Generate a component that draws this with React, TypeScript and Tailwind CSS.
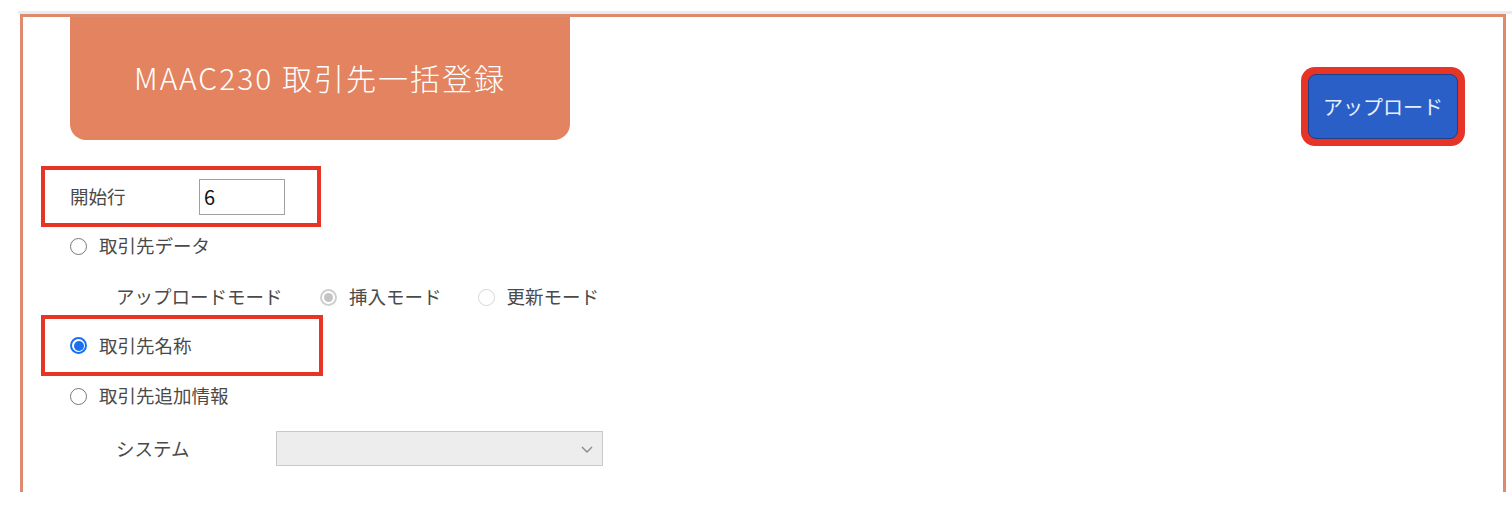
import { ReactNode } from "react";

const JP = { fontFamily: '"Noto Sans CJK JP", "Noto Sans", sans-serif' };

function Radio({ checked = false, disabled = false }: { checked?: boolean; disabled?: boolean }) {
  if (checked && disabled) {
    return (
      <span className="flex h-[17px] w-[17px] items-center justify-center rounded-full border-2 border-[#cfcfcf] bg-white">
        <span className="h-[9px] w-[9px] rounded-full bg-[#c4c4c4]" />
      </span>
    );
  }
  if (checked) {
    return (
      <span className="flex h-[17px] w-[17px] items-center justify-center rounded-full border-2 border-[#1a6ff0] bg-white">
        <span className="h-[10px] w-[10px] rounded-full bg-[#1a6ff0]" />
      </span>
    );
  }
  return (
    <span
      className={
        disabled
          ? "h-[17px] w-[17px] rounded-full border-[1.5px] border-[#d6d6d6] bg-white"
          : "h-[17px] w-[17px] rounded-full border-[1.5px] border-[#777] bg-white"
      }
    />
  );
}

function Option({ checked, disabled, children }: { checked?: boolean; disabled?: boolean; children: ReactNode }) {
  return (
    <label className="flex items-center gap-[12px]">
      <Radio checked={checked} disabled={disabled} />
      <span>{children}</span>
    </label>
  );
}

export default function App() {
  return (
    <div className="h-[518px] w-full bg-white pt-[11px] text-[18.5px] text-[#4a4a4a]" style={JP}>
      <div className="ml-[18px] h-[3px] bg-[#e8ebf2]" />
      <div className="ml-[20px] h-[478px] w-[1486px] border-x-[3px] border-t-[3px] border-[#dd8a6d]">
        <div className="flex items-start justify-between">
          <div className="ml-[47px] flex h-[123px] w-[500px] items-center justify-center rounded-b-[16px] bg-[#e3835f] pb-[2px] text-[30px] font-light tracking-[2px] text-white">
            MAAC230 取引先一括登録
          </div>
          <div className="mr-[38px] mt-[50px] rounded-[14px] bg-[#e63427] p-[7px]">
            <button className="flex h-[65px] w-[150px] items-center justify-center rounded-[8px] border border-[#1d3f8c] bg-[#2a5fc7] text-[20px] text-[#e6f0ff]">
              アップロード
            </button>
          </div>
        </div>

        <div className="ml-[18px] mt-[20px] flex flex-col">
          <div className="flex h-[61px] w-[280px] items-center border-4 border-[#e63427] pl-[25px]">
            <span className="w-[129px]">開始行</span>
            <input
              readOnly
              value="6"
              className="h-[36px] w-[86px] border border-[#a0a0a0] px-[4px] text-[20px] text-[#111] outline-none"
            />
          </div>

          <div className="flex h-[38px] items-center pl-[29px]">
            <Option>取引先データ</Option>
          </div>

          <div className="mt-[14px] flex h-[36px] items-center pl-[75px]">
            <span className="w-[204px]">アップロードモード</span>
            <div className="flex items-center gap-[36px]">
              <Option checked disabled>挿入モード</Option>
              <Option disabled>更新モード</Option>
            </div>
          </div>

          <div className="flex h-[61px] w-[282px] items-center border-4 border-[#e63427] pl-[25px]">
            <Option checked>取引先名称</Option>
          </div>

          <div className="flex h-[40px] items-center pl-[29px]">
            <Option>取引先追加情報</Option>
          </div>

          <div className="mt-[15px] flex items-center pl-[75px]">
            <span className="w-[160px]">システム</span>
            <div className="flex h-[35px] w-[327px] items-center justify-end border border-[#c9c9c9] bg-[#ededed] pr-[8px]">
              <svg width="14" height="14" viewBox="0 0 14 14" fill="none">
                <path d="M2 5l5 5 5-5" stroke="#8a8a8a" strokeWidth="1.4" />
              </svg>
            </div>
          </div>
        </div>
      </div>
    </div>
  );
}
